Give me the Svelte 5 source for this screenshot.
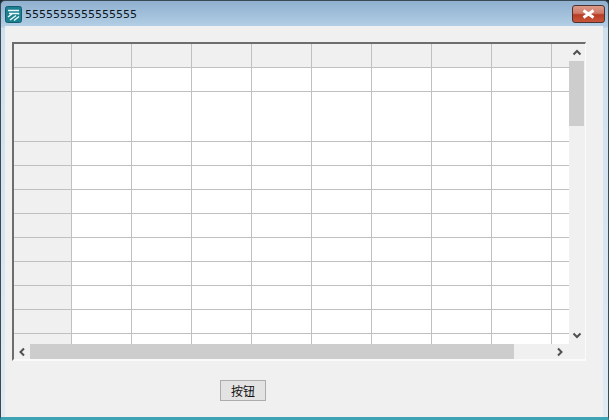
<script>
  const heights = [24, 24, 50, 24, 24, 24, 24, 24, 24, 24, 24, 24, 24];
  const cols = Array.from({ length: 10 });
</script>

<div class="window">
  <header class="titlebar">
    <svg class="appicon" width="17" height="17" viewBox="0 0 17 17">
      <rect x="0.5" y="0.5" width="16" height="16" rx="2" fill="#1d7f8f" stroke="#0e5f70" />
      <path d="M3 4.5H14M4 7.5H13.5V8.5M3 11L7 8M5 14L11 9.5M9 14.5L14 10.5" stroke="#e9fbfb" stroke-width="1.5" fill="none" />
    </svg>
    <span class="title">5555555555555555</span>
    <button class="close" aria-label="关闭">
      <svg width="13" height="10" viewBox="0 0 13 10">
        <path d="M1.5 1.5L11.5 8.5M11.5 1.5L1.5 8.5" stroke="#fff" stroke-width="2.8" />
      </svg>
    </button>
  </header>

  <main class="client">
    <section class="gridbox">
      <div class="gridrow-area">
        <div class="sheet">
          {#each heights as h, r}
            <div class="row" style="height:{h}px">
              {#each cols as _, c}
                <div class="cell" class:fixed={r === 0 || c === 0}></div>
              {/each}
            </div>
          {/each}
        </div>
        <div class="vscroll">
          <svg class="arrow" width="16" height="17" viewBox="0 0 16 17">
            <path d="M4.5 10.5L8 7L11.5 10.5" stroke="#505050" stroke-width="2" fill="none" />
          </svg>
          <div class="vtrack"><div class="vthumb"></div></div>
          <svg class="arrow" width="16" height="17" viewBox="0 0 16 17">
            <path d="M4.5 6.5L8 10L11.5 6.5" stroke="#505050" stroke-width="2" fill="none" />
          </svg>
        </div>
      </div>
      <div class="hscroll">
        <svg class="arrow" width="16" height="16" viewBox="0 0 16 16">
          <path d="M10 4.5L6.5 8L10 11.5" stroke="#505050" stroke-width="2" fill="none" />
        </svg>
        <div class="hthumb"></div>
        <svg class="arrow right" width="16" height="16" viewBox="0 0 16 16">
          <path d="M6 4.5L9.5 8L6 11.5" stroke="#505050" stroke-width="2" fill="none" />
        </svg>
      </div>
    </section>
    <div class="actions">
      <button class="btn">按钮</button>
    </div>
  </main>
</div>

<style>
  :global(body) {
    margin: 0;
    overflow: hidden;
    background: #1b2a33;
  }
  .window {
    box-sizing: border-box;
    width: 609px;
    height: 420px;
    display: flex;
    flex-direction: column;
    padding: 0 5px 0 1px;
    background: linear-gradient(180deg, #8fb0cf 0, #b4cfe6 26px, #cfe0ee 27px, #dfeaf3 100%);
    border-top: 1px solid #3a4a55;
    border-left: 1px solid #3a4a55;
    border-right: 1px solid #3a4a55;
    border-bottom: 3px solid #3fa3b6;
    border-radius: 5px 5px 0 0;
    font-family: "Liberation Sans", "Noto Sans CJK SC", sans-serif;
  }
  .titlebar {
    box-sizing: border-box;
    height: 25px;
    flex: none;
    display: flex;
    align-items: center;
    padding: 1px 0 0 3px;
    gap: 3px;
  }
  .appicon {
    flex: none;
  }
  .title {
    font-family: "DejaVu Sans", sans-serif;
    font-size: 11px;
    color: #0c1620;
  }
  .close {
    align-self: flex-start;
    margin: 3px -2px 0 auto;
    width: 33px;
    height: 18px;
    padding: 0;
    display: flex;
    align-items: center;
    justify-content: center;
    border: 1px solid #4a3330;
    border-radius: 3px;
    background: linear-gradient(180deg, #dd9a88 0, #cf7a68 45%, #b83c24 55%, #c8563a 100%);
  }
  .client {
    flex: 1;
    min-height: 0;
    display: flex;
    flex-direction: column;
    margin-left: 3px;
    padding: 16px 0 0 7px;
    background: #f0f0f0;
  }
  .gridbox {
    box-sizing: border-box;
    width: 574px;
    height: 319px;
    flex: none;
    display: flex;
    flex-direction: column;
    border-top: 2px solid #6d6d6d;
    border-left: 2px solid #6d6d6d;
    border-right: 1px solid #fafafa;
    border-bottom: 2px solid #fafafa;
  }
  .gridrow-area {
    flex: none;
    height: 300px;
    display: flex;
  }
  .sheet {
    width: 555px;
    overflow: hidden;
    background: #fff;
  }
  .row {
    display: flex;
    box-sizing: border-box;
    border-bottom: 1px solid #c0c0c0;
  }
  .cell {
    flex: none;
    box-sizing: border-box;
    width: 60px;
    border-right: 1px solid #c0c0c0;
  }
  .cell:first-child {
    width: 58px;
  }
  .fixed {
    background: #f0f0f0;
  }
  .vscroll {
    width: 16px;
    flex: none;
    display: flex;
    flex-direction: column;
    background: #f0f0f0;
  }
  .vtrack {
    flex: 1;
    min-height: 0;
  }
  .vthumb {
    width: 15px;
    height: 65px;
    background: #cdcdcd;
  }
  .arrow {
    flex: none;
    display: block;
  }
  .hscroll {
    flex: 1;
    min-height: 0;
    display: flex;
    background: #f0f0f0;
  }
  .hthumb {
    width: 484px;
    background: #cdcdcd;
  }
  .right {
    margin-left: 38px;
  }
  .actions {
    padding: 19px 0 0 208px;
  }
  .btn {
    width: 46px;
    height: 21px;
    padding: 0;
    border: 1px solid #acacac;
    background: #e3e3e3;
    color: #111;
    font-family: "Noto Sans CJK SC", sans-serif;
    font-size: 12px;
    line-height: 18px;
  }
</style>
